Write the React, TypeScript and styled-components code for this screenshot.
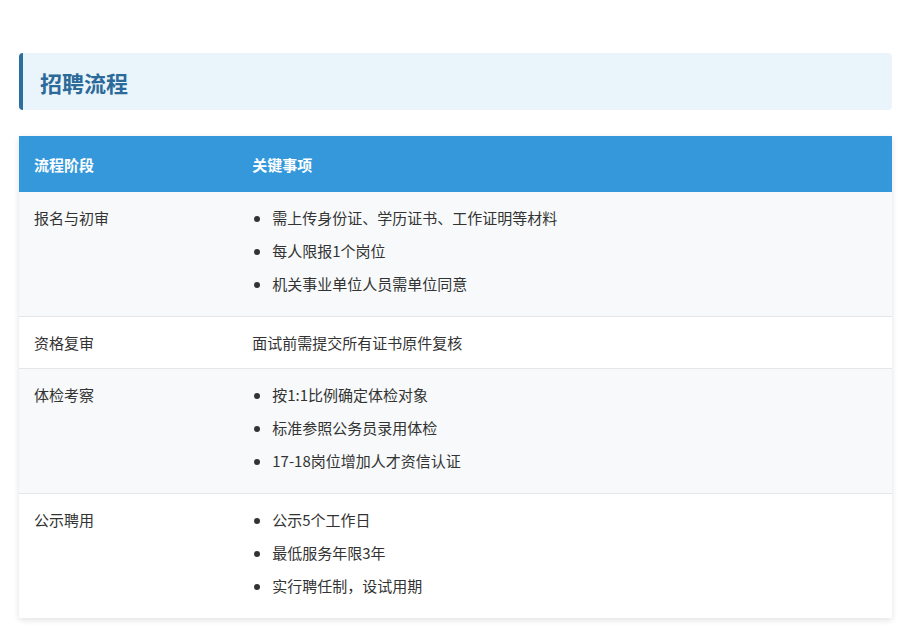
import React from "react";
import styled, { createGlobalStyle } from "styled-components";

const Global = createGlobalStyle`
  body { margin: 0; background: #fff; font-family: "Noto Sans CJK SC", "Noto Sans", sans-serif; color: #333; }
`;

const Page = styled.div`
  padding: 53px 13px 20px 19px;
`;

const Title = styled.h2`
  margin: 0 0 26px;
  height: 57px;
  display: flex;
  align-items: center;
  padding-left: 17px;
  background: #eaf5fb;
  border-left: 4px solid #2c6e9e;
  border-radius: 4px;
  font-size: 22px;
  font-weight: 700;
  color: #2c6a9a;
`;

const Table = styled.table`
  width: 100%;
  border-collapse: collapse;
  box-shadow: 0 2px 6px rgba(0, 0, 0, 0.12);
  font-size: 15px;
`;

const Th = styled.th`
  background: #3498db;
  color: #fff;
  text-align: left;
  font-weight: 700;
  height: 56px;
  padding: 0 15px;
  box-sizing: border-box;
`;

const Tr = styled.tr<{ $alt: boolean }>`
  background: ${(p) => (p.$alt ? "#f7f9fa" : "#fff")};
  border-top: 1px solid #e4e6e8;
  &:first-child { border-top: none; }
`;

const Td = styled.td`
  vertical-align: top;
  padding: 15px;
  line-height: 21px;
  color: #333;
`;

const List = styled.ul`
  margin: 0 0 7px;
  padding-left: 20px;
  li { margin-bottom: 12px; }
  li:last-child { margin-bottom: 0; }
`;

const rows: [string, string | string[]][] = [
  ["报名与初审", ["需上传身份证、学历证书、工作证明等材料", "每人限报1个岗位", "机关事业单位人员需单位同意"]],
  ["资格复审", "面试前需提交所有证书原件复核"],
  ["体检考察", ["按1:1比例确定体检对象", "标准参照公务员录用体检", "17-18岗位增加人才资信认证"]],
  ["公示聘用", ["公示5个工作日", "最低服务年限3年", "实行聘任制，设试用期"]],
];

export default function App() {
  return (
    <Page>
      <Global />
      <Title>招聘流程</Title>
      <Table>
        <colgroup>
          <col style={{ width: "25%" }} />
          <col />
        </colgroup>
        <thead>
          <tr>
            <Th>流程阶段</Th>
            <Th>关键事项</Th>
          </tr>
        </thead>
        <tbody>
          {rows.map(([stage, items], i) => (
            <Tr key={stage} $alt={i % 2 === 0}>
              <Td>{stage}</Td>
              <Td>
                {Array.isArray(items) ? (
                  <List>
                    {items.map((it) => (
                      <li key={it}>{it}</li>
                    ))}
                  </List>
                ) : (
                  items
                )}
              </Td>
            </Tr>
          ))}
        </tbody>
      </Table>
    </Page>
  );
}
